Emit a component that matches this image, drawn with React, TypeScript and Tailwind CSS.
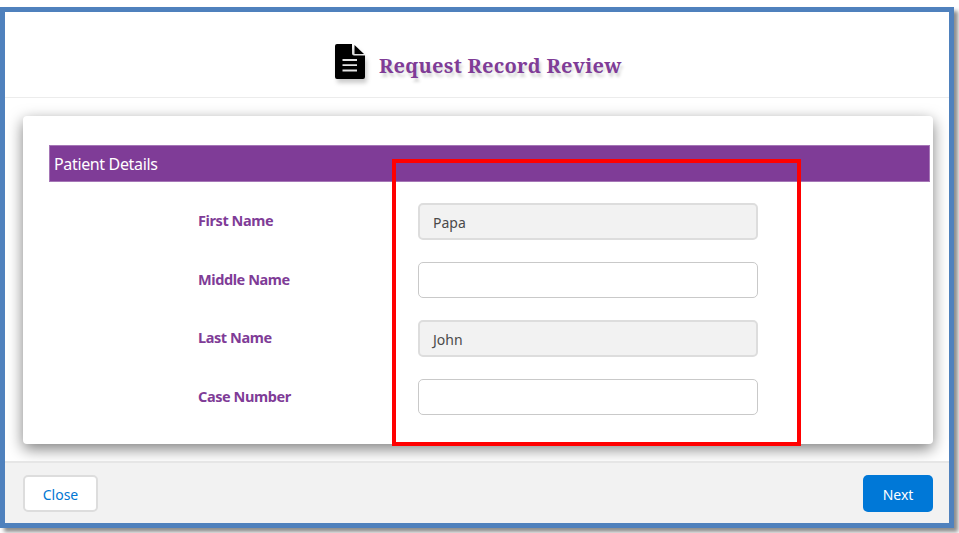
const fields = [
  { label: 'First Name', value: 'Papa' },
  { label: 'Middle Name', value: '' },
  { label: 'Last Name', value: 'John' },
  { label: 'Case Number', value: '' },
];

export default function App() {
  return (
    <div className="h-[533px] w-[959px] overflow-hidden bg-white pt-[7px] font-['Noto_Sans','Open_Sans',sans-serif]">
      <div className="flex h-[521px] w-[954px] flex-col border-[5px] border-[#4f81bd] bg-white shadow-[4px_4px_4px_0px_rgba(0,0,0,0.45)]">
        <header className="flex h-[86px] shrink-0 items-start border-b border-[#ececec] pl-[330px]">
          <svg viewBox="0 0 30 35" className="mt-[32px] h-[35px] w-[30px] shrink-0 drop-shadow-[2px_4px_2px_rgba(0,0,0,0.2)]">
            <path d="M2 0h15v9.500q0 2 2 2h11V33q0 2-2 2H2q-2 0-2-2V2q0-2 2-2Z" fill="#000" />
            <path d="M19.500 1v9H29Z" fill="#000" />
            <path d="M7.500 16h14.500M7.500 21.200h14.500M7.500 26.500h14.500" stroke="#e4e4e4" strokeWidth="1.800" />
          </svg>
          <h1 className="mt-[39px] ml-[14px] whitespace-nowrap font-['Noto_Serif','DejaVu_Serif_Condensed','DejaVu_Serif',serif] text-[20px] leading-[30px] font-bold tracking-[0.270px] text-[#7f3c97] [text-shadow:2px_4px_3px_rgba(0,0,0,0.16)]">
            Request Record Review
          </h1>
        </header>
        <main className="h-[363px] shrink-0 overflow-hidden pt-[18px] pl-[18px]">
          <section className="h-[328px] w-[910px] rounded-[4px] bg-white pt-[29px] pl-[26px] shadow-[0_5px_15px_rgba(0,0,0,0.5)]">
            <h2 className="flex h-[37px] w-[881px] items-center border border-[#a576b6] bg-[#7f3c97] pl-[4px] text-[16px] tracking-[-0.350px] text-white">Patient Details</h2>
            <div className="flex flex-col gap-[21.500px] pt-[21px]">
              {fields.map((f) => (
                <div key={f.label} className="flex h-[37px] items-start">
                  <label className="w-[369px] pt-[7px] pl-[149px] text-[14.500px] leading-[21px] font-bold tracking-[-0.420px] whitespace-nowrap text-[#7f3c97]">{f.label}</label>
                  <div className={f.value ? 'flex h-[37px] w-[340px] items-center rounded-[5px] border-2 border-[#dddddd] bg-[#f2f2f2] pt-[1px] pl-[13px] text-[14px] text-[#4a4a4a]' : 'h-[36px] w-[340px] rounded-[5px] border border-[#c9c9c9] bg-white'}>
                    {f.value}
                  </div>
                </div>
              ))}
            </div>
          </section>
        </main>
        <footer className="flex grow items-center justify-between border-t-2 border-[#e6e6e6] bg-[#f2f2f2] px-[18px] pt-px text-[14px]">
          <button className="h-[37px] w-[75px] rounded-[5px] border-2 border-[#dddddd] bg-white pt-px text-[#0176d3]">Close</button>
          <button className="mr-[-2px] h-[37px] w-[70px] rounded-[5px] bg-[#0078d7] pt-px text-white">Next</button>
        </footer>
      </div>
      <div className="pointer-events-none absolute top-[159px] left-[392px] h-[287px] w-[409px] border-4 border-[#ff0000]" />
    </div>
  );
}
